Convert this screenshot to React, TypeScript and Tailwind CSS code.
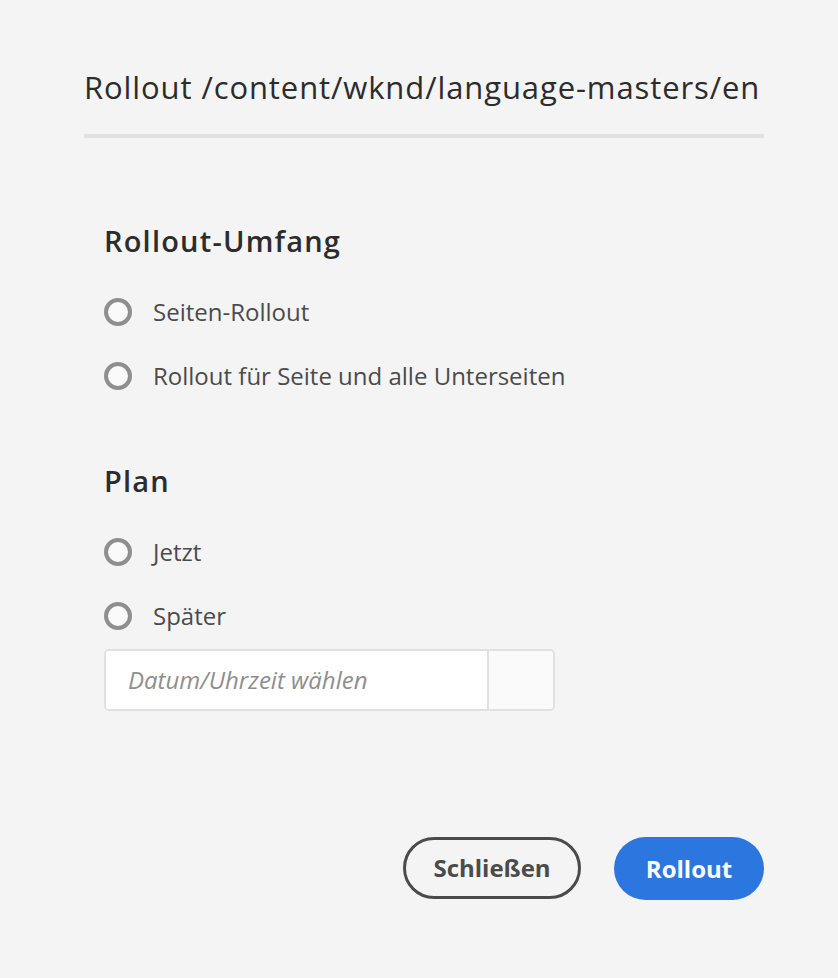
import { useState } from 'react'

const font = { fontFamily: '"Open Sans", "Noto Sans", sans-serif' }

export default function App() {
  const [scope, setScope] = useState<string | null>(null)
  const [plan, setPlan] = useState<string | null>(null)

  return (
    <div className="w-full min-h-screen bg-[#f4f4f4] pl-[84px] pr-[74px] pt-[67px] pb-[79px]" style={font}>
      <h1 className="text-[31px] leading-[40px] text-[#2c2c2c] font-medium tracking-[0.9px] whitespace-nowrap">
        Rollout /content/wknd/language-masters/en
      </h1>
      <div className="mt-[27px] h-1 bg-[#e1e1e1]" />

      <div className="pl-[20px]">
        <h2 className="mt-[85px] text-[29px] leading-[36px] font-semibold text-[#2c2c2c] tracking-[1.2px]">Rollout-Umfang</h2>
        <div className="mt-[21px]">
          <Radio label="Seiten-Rollout" checked={scope === 'page'} onClick={() => setScope('page')} />
          <Radio label="Rollout für Seite und alle Unterseiten" checked={scope === 'all'} onClick={() => setScope('all')} />
        </div>

        <h2 className="mt-[55px] text-[29px] leading-[36px] font-semibold text-[#2c2c2c] tracking-[1.2px]">Plan</h2>
        <div className="mt-[21px]">
          <Radio label="Jetzt" checked={plan === 'now'} onClick={() => setPlan('now')} />
          <Radio label="Später" checked={plan === 'later'} onClick={() => setPlan('later')} />
        </div>

        <div className="mt-px flex w-[451px] h-[62px] rounded-[5px] border-2 border-[#e1e1e1] overflow-hidden">
          <input
            placeholder="Datum/Uhrzeit wählen"
            className="flex-1 min-w-0 bg-white px-[22px] text-[24px] italic text-[#2c2c2c] placeholder:text-[#8e8e8e] outline-none"
          />
          <div className="w-[66px] border-l-2 border-[#e1e1e1] bg-[#fafafa]" />
        </div>
      </div>

      <div className="mt-[126px] flex justify-end gap-[33px]">
        <button className="w-[178px] h-[62px] rounded-full border-[3px] border-[#4b4b4b] text-[24px] font-bold text-[#4b4b4b]">
          Schließen
        </button>
        <button className="w-[150px] h-[63px] rounded-full bg-[#2b76df] text-[24px] font-bold text-white">
          Rollout
        </button>
      </div>
    </div>
  )
}

function Radio({ label, checked, onClick }: { label: string; checked: boolean; onClick: () => void }) {
  return (
    <div className="h-16 flex items-center cursor-pointer" onClick={onClick}>
      <span
        className={`w-[28px] h-[28px] rounded-full bg-[#fafafa] ${checked ? 'border-[8px] border-[#2b76df]' : 'border-[4px] border-[#8e8e8e]'}`}
      />
      <span className="ml-[21px] text-[24px] text-[#4b4b4b]">{label}</span>
    </div>
  )
}
